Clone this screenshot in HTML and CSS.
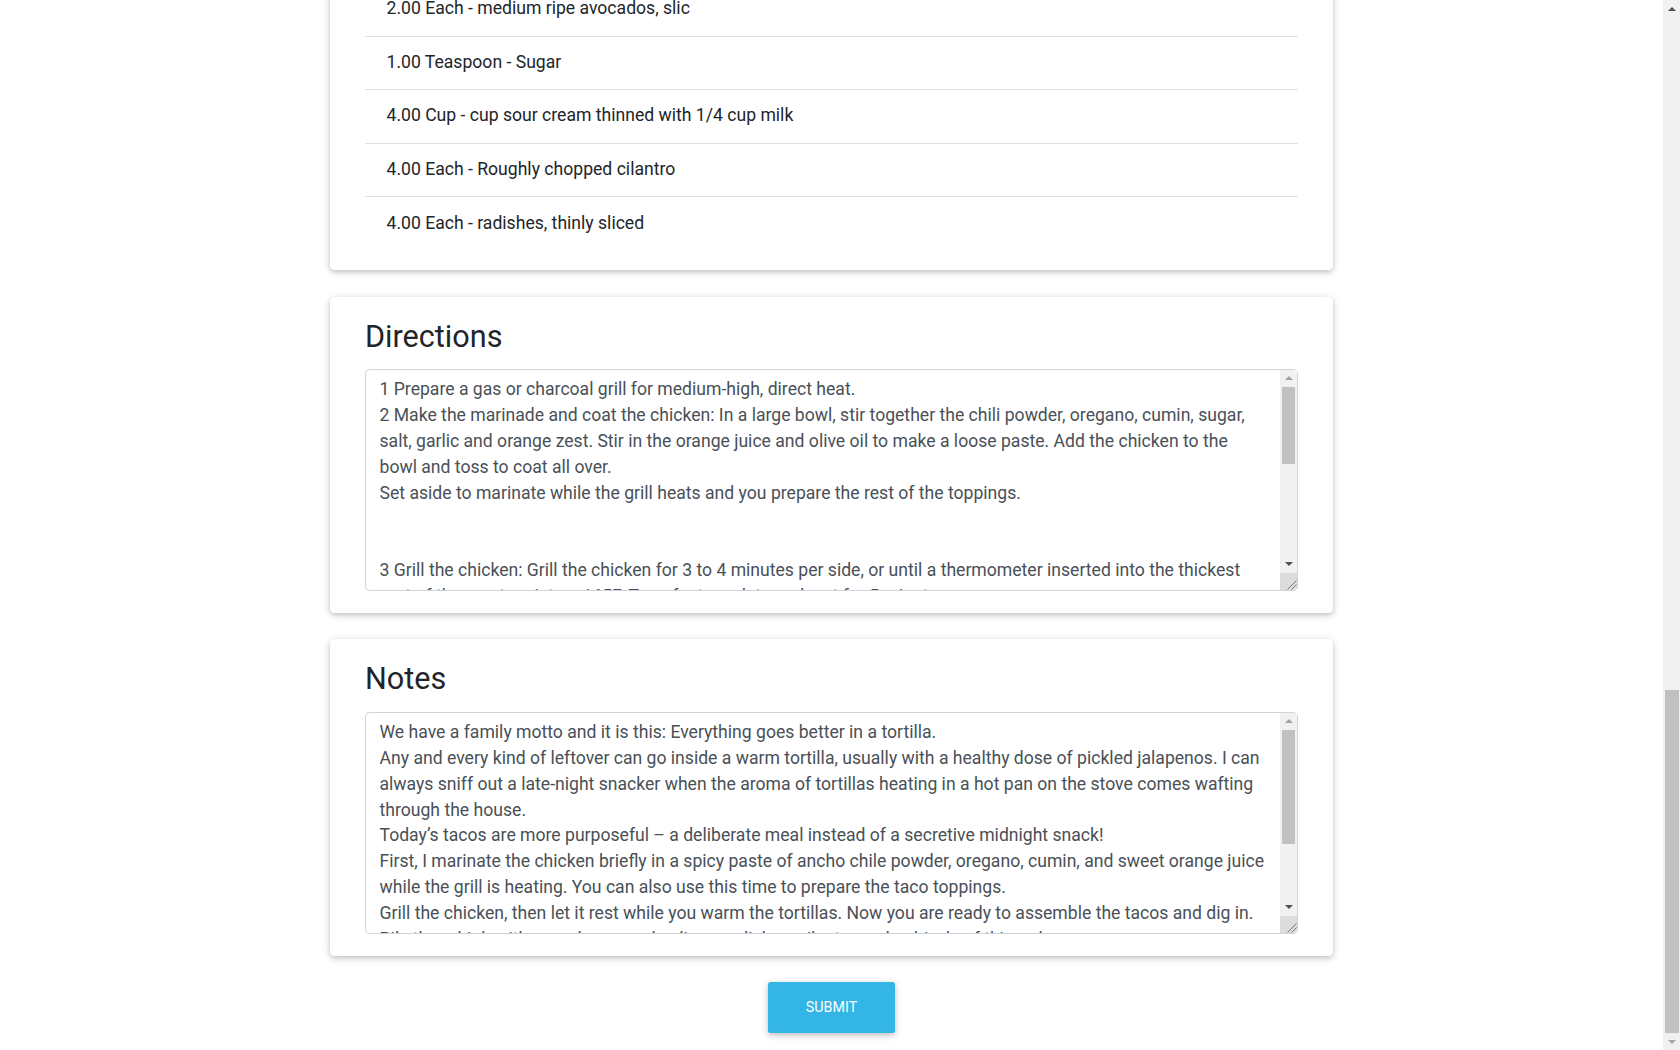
FILE: index.html
```html
<!DOCTYPE html>
<html lang="en">
<head>
<meta charset="utf-8">
<title>Edit Recipe - Chicken Tacos</title>
<link rel="stylesheet" href="styles.css">
</head>
<body>
<main class="container">
  <section class="card">
    <h2 class="card-title">Recipe</h2>
    <div class="field"><label class="field-label">Name</label><div class="input">Chicken Tacos</div></div>
    <div class="field"><label class="field-label">Source</label><div class="input">Simply Recipes</div></div>
    <div class="field"><label class="field-label">Category</label><div class="input">Main Dish</div></div>
    <div class="field"><label class="field-label">Cuisine</label><div class="input">Mexican</div></div>
    <div class="field"><label class="field-label">Prep Time</label><div class="input">15 minutes</div></div>
    <div class="field"><label class="field-label">Cook Time</label><div class="input">10 minutes</div></div>
    <div class="field"><label class="field-label">Servings</label><div class="input">4</div></div>
  </section>

  <section class="card">
    <h2 class="card-title">Ingredients</h2>
    <ul class="list">
      <li class="list-item">2.00 Tablespoon - ancho chile powder</li>
      <li class="list-item">1.00 Tablespoon - dried oregano</li>
      <li class="list-item">1.00 Teaspoon - ground cumin</li>
      <li class="list-item">2.00 Teaspoon - kosher salt</li>
      <li class="list-item">2.00 Each - garlic cloves, minced</li>
      <li class="list-item">1.00 Teaspoon - orange zest</li>
      <li class="list-item">1.00 Each - juice of 1 orange</li>
      <li class="list-item">2.00 Tablespoon - olive oil</li>
      <li class="list-item">1.50 Pound - boneless skinless chicken thighs</li>
      <li class="list-item">8.00 Each - corn tortillas</li>
      <li class="list-item">2.00 Cup - arugula</li>
      <li class="list-item">2.00 Each - medium ripe avocados, slic</li>
      <li class="list-item">1.00 Teaspoon - Sugar</li>
      <li class="list-item">4.00 Cup - cup sour cream thinned with 1/4 cup milk</li>
      <li class="list-item">4.00 Each - Roughly chopped cilantro</li>
      <li class="list-item">4.00 Each - radishes, thinly sliced</li>
    </ul>
  </section>

  <section class="card">
    <h2 class="card-title">Directions</h2>
    <div class="textarea-wrap">
      <textarea class="text-box">1 Prepare a gas or charcoal grill for medium-high, direct heat.
2 Make the marinade and coat the chicken: In a large bowl, stir together the chili powder, oregano, cumin, sugar, salt, garlic and orange zest. Stir in the orange juice and olive oil to make a loose paste. Add the chicken to the bowl and toss to coat all over.
Set aside to marinate while the grill heats and you prepare the rest of the toppings.


3 Grill the chicken: Grill the chicken for 3 to 4 minutes per side, or until a thermometer inserted into the thickest part of the meat registers 165F. Transfer to a plate and rest for 5 minutes.


4 Warm the tortillas: Place each tortilla on the grill for about 20 seconds per side, or until warmed and slightly charred. Wrap in a clean towel to keep warm.


5 Assemble the tacos: Slice the chicken into strips. On each tortilla, place a small handful of arugula. Top with chicken slices, sliced avocado, radishes, chopped onion and cilantro. Drizzle with the thinned sour cream and serve with lime wedges.</textarea>
      <div class="vscroll" aria-hidden="true">
        <span class="sb-btn"><i class="arrow-up arrow-off"></i></span>
        <span class="sb-track track-top"><span class="sb-thumb" style="height:77px"></span></span>
        <span class="sb-btn"><i class="arrow-down"></i></span>
        <span class="sb-corner">
          <svg width="17" height="17" viewBox="0 0 17 17"><path d="M7.5 16.5 L16.5 7.5 M11.5 16.5 L16.5 11.5" stroke="#7a7a7a" stroke-width="1" fill="none"/></svg>
        </span>
      </div>
    </div>
  </section>

  <section class="card">
    <h2 class="card-title">Notes</h2>
    <div class="textarea-wrap">
      <textarea class="text-box">We have a family motto and it is this: Everything goes better in a tortilla.
Any and every kind of leftover can go inside a warm tortilla, usually with a healthy dose of pickled jalapenos. I can always sniff out a late-night snacker when the aroma of tortillas heating in a hot pan on the stove comes wafting through the house.
Today’s tacos are more purposeful – a deliberate meal instead of a secretive midnight snack!
First, I marinate the chicken briefly in a spicy paste of ancho chile powder, oregano, cumin, and sweet orange juice while the grill is heating. You can also use this time to prepare the taco toppings.
Grill the chicken, then let it rest while you warm the tortillas. Now you are ready to assemble the tacos and dig in.
Pile them high with arugula, avocado slices, radishes, cilantro and a drizzle of thinned sour cream.
Serve with lime wedges and your favorite hot sauce.</textarea>
      <div class="vscroll" aria-hidden="true">
        <span class="sb-btn"><i class="arrow-up arrow-off"></i></span>
        <span class="sb-track track-top"><span class="sb-thumb" style="height:114px"></span></span>
        <span class="sb-btn"><i class="arrow-down"></i></span>
        <span class="sb-corner">
          <svg width="17" height="17" viewBox="0 0 17 17"><path d="M7.5 16.5 L16.5 7.5 M11.5 16.5 L16.5 11.5" stroke="#7a7a7a" stroke-width="1" fill="none"/></svg>
        </span>
      </div>
    </div>
  </section>

  <div class="actions">
    <button class="btn-submit" type="button">Submit</button>
  </div>
</main>

<div class="page-scroll" aria-hidden="true">
  <span class="sb-btn"><i class="arrow-up"></i></span>
  <span class="sb-track track-bottom"><span class="sb-thumb" style="height:343px"></span></span>
  <span class="sb-btn"><i class="arrow-down arrow-off"></i></span>
</div>
<script src="script.js"></script>
</body>
</html>
```

FILE: styles.css
```css
html, body {
  margin: 0;
  padding: 0;
  background: #fff;
}

body {
  font-family: Roboto, "Liberation Sans", Arial, sans-serif;
  font-size: 17.6px;
  line-height: 25.8px;
  color: #212529;
  padding-right: 17px;
}

.container {
  width: 1003px;
  margin: 0 auto;
  padding: 27px 0 17px;
  display: flex;
  flex-direction: column;
  gap: 26.5px;
}

.card {
  background: #fff;
  border-radius: 4.5px;
  box-shadow: 0 2px 5px 0 rgba(0, 0, 0, 0.16), 0 2px 10px 0 rgba(0, 0, 0, 0.12);
  padding: 22px 35px 22px;
}

.card-title {
  margin: 0 0 13.5px;
  font-size: 30.6px;
  font-weight: 400;
  line-height: 1.2;
  color: #212529;
}

.list {
  list-style: none;
  margin: 0;
  padding: 0;
}

.list-item {
  padding: 13.4px 21.5px;
  line-height: 25.8px;
  border-bottom: 1px solid rgba(0, 0, 0, 0.125);
  color: #212529;
}

.list-item:last-child {
  border-bottom: 0;
  padding-bottom: 11.8px;
}

.field {
  display: flex;
  flex-direction: column;
  gap: 6px;
  margin-bottom: 18px;
}

.field-label {
  color: #757575;
  font-size: 16px;
}

.input {
  border: 1px solid #ced4da;
  border-radius: 4.5px;
  padding: 6.75px 13.5px;
  color: #495057;
}

.textarea-wrap {
  position: relative;
}

.text-box {
  display: block;
  box-sizing: border-box;
  width: 100%;
  height: 222px;
  margin: 0;
  padding: 7.4px 30.5px 6px 13.5px;
  border: 1px solid #ced4da;
  border-radius: 4.5px;
  font-family: Roboto, "Liberation Sans", Arial, sans-serif;
  font-size: 17.6px;
  line-height: 25.85px;
  color: #495057;
  background: #fff;
  resize: none;
  overflow: hidden;
}

/* drawn scrollbars (overlay) */
.vscroll {
  position: absolute;
  top: 1px;
  right: 1px;
  bottom: 1px;
  width: 17px;
  display: flex;
  flex-direction: column;
  background: #f1f1f1;
}

.page-scroll {
  position: fixed;
  top: 0;
  right: 0;
  bottom: 0;
  width: 17px;
  display: flex;
  flex-direction: column;
  background: #f1f1f1;
}

.sb-btn {
  flex: 0 0 17px;
  height: 17px;
  display: flex;
  align-items: center;
  justify-content: center;
}

.sb-track {
  flex: 1 1 auto;
  display: flex;
  flex-direction: column;
}

.track-top {
  justify-content: flex-start;
}

.track-bottom {
  justify-content: flex-end;
}

.sb-thumb {
  display: block;
  margin-left: 2px;
  width: 13px;
  background: #c1c1c1;
}

.page-scroll .sb-thumb {
  width: 14px;
}

.sb-corner {
  flex: 0 0 17px;
  height: 17px;
  background: #dcdcdc;
  border-bottom-right-radius: 3.5px;
}

.sb-corner svg {
  display: block;
}

.arrow-up,
.arrow-down {
  display: block;
  width: 0;
  height: 0;
  border-left: 4px solid transparent;
  border-right: 4px solid transparent;
}

.arrow-up {
  border-bottom: 4px solid #505050;
}

.arrow-down {
  border-top: 4px solid #505050;
}

.arrow-up.arrow-off {
  border-bottom-color: #a3a3a3;
}

.arrow-down.arrow-off {
  border-top-color: #a3a3a3;
}

.actions {
  display: flex;
  justify-content: center;
  margin-top: -0.5px;
}

.btn-submit {
  font-family: Roboto, "Liberation Sans", Arial, sans-serif;
  font-size: 14.3px;
  font-weight: 400;
  line-height: 20.4px;
  text-transform: uppercase;
  color: #fff;
  background: #33b5e5;
  border: 0;
  border-radius: 2.5px;
  padding: 15.3px 37.8px;
  box-shadow: 0 2px 5px 0 rgba(0, 0, 0, 0.16), 0 2px 10px 0 rgba(0, 0, 0, 0.12);
  cursor: pointer;
}
```

FILE: script.js
```js
function scrollToEnd() {
  window.scrollTo(0, document.documentElement.scrollHeight);
}
scrollToEnd();
window.addEventListener('load', scrollToEnd);
```
